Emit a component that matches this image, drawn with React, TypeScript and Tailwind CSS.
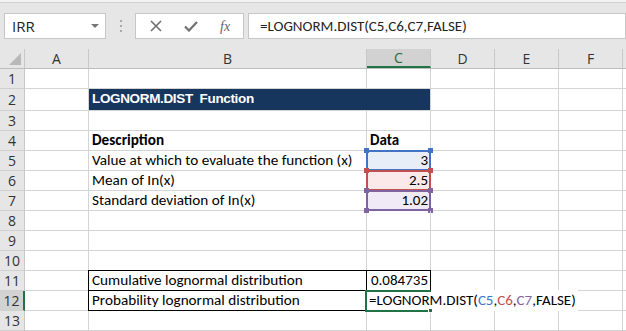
import React from "react";

const GRID = "border-[#d4d4d4]";
const CELL_FONT = { fontFamily: "Carlito, Lato, 'Liberation Sans', sans-serif" };

const COLS = [
  { key: "A", w: "w-[64px]" },
  { key: "B", w: "w-[278px]" },
  { key: "C", w: "w-[64px]" },
  { key: "D", w: "w-[64px]" },
  { key: "E", w: "w-[64px]" },
  { key: "F", w: "w-[64px]" },
];

type Sel = { color: string; fill: string };
const SEL: Record<number, Sel> = {
  5: { color: "border-[#4472c4]", fill: "bg-[#e8eef8]" },
  6: { color: "border-[#c0504d]", fill: "bg-[#fbe9e9]" },
  7: { color: "border-[#8064a2]", fill: "bg-[#efeaf6]" },
};
const HANDLE: Record<number, string> = {
  5: "bg-[#4472c4]",
  6: "bg-[#c0504d]",
  7: "bg-[#8064a2]",
};

function Toolbar() {
  return (
    <div className="relative h-[49px] bg-[#e6e6e6]">
      <div className="h-[3px] bg-[#f3f3f3] border-b border-[#d0d0d0]" />
      <div className="flex items-center pt-[10px]">
        <div className="ml-[4px] flex h-[26px] w-[102px] items-center justify-between border border-[#c6c6c6] bg-white pl-[7px] pr-[6px]">
          <span className="text-[15px] text-[#222]" style={{ fontFamily: "'Open Sans', sans-serif" }}>IRR</span>
          <svg width="8" height="5" viewBox="0 0 8 5"><path d="M0 0h8L4 4z" fill="#777" /></svg>
        </div>
        <div className="ml-[14px] flex flex-col gap-[3px]">
          <span className="h-[2px] w-[2px] bg-[#aaa]" />
          <span className="h-[2px] w-[2px] bg-[#aaa]" />
          <span className="h-[2px] w-[2px] bg-[#aaa]" />
        </div>
        <div className="ml-[13px] flex h-[26px] w-[109px] items-center border border-[#c6c6c6] bg-white">
          <svg className="ml-[14px]" width="12" height="12" viewBox="0 0 12 12">
            <path d="M1 1L11 11M11 1L1 11" stroke="#707070" strokeWidth="1.6" />
          </svg>
          <svg className="ml-[22px]" width="14" height="11" viewBox="0 0 14 11">
            <path d="M1 5.5L5 9.5L13 1" stroke="#707070" strokeWidth="2.2" fill="none" />
          </svg>
          <span className="ml-[22px] text-[14px] italic text-[#666]" style={{ fontFamily: "'Liberation Serif', serif" }}>
            fx
          </span>
        </div>
        <div className="ml-[4px] flex h-[26px] flex-1 items-center border border-[#c6c6c6] bg-white pl-[11px]">
          <span className="text-[15px] text-[#222]" style={CELL_FONT}>
            =LOGNORM.DIST(C5,C6,C7,FALSE)
          </span>
        </div>
      </div>
    </div>
  );
}

function HeaderRow() {
  return (
    <div className="flex h-[20px] border-b border-[#bdbdbd] bg-[#e6e6e6] text-[14px] text-[#333]" style={{ fontFamily: "'Open Sans', sans-serif" }}>
      <div className="relative w-[25px] shrink-0 border-r border-[#c8c8c8]">
        <svg className="absolute bottom-[3px] right-[3px]" width="12" height="12" viewBox="0 0 12 12">
          <path d="M12 0V12H0z" fill="#b8b8b8" />
        </svg>
      </div>
      {COLS.map((c) => (
        <div
          key={c.key}
          className={`${c.w} shrink-0 flex items-center justify-center border-r border-[#c8c8c8] ${
            c.key === "C" ? "bg-[#d2d2d2] text-[#1f6b40] border-b-2 border-b-[#217346]" : ""
          }`}
        >
          {c.key}
        </div>
      ))}
      <div className="flex-1" />
    </div>
  );
}

function RowHeader({ n }: { n: number }) {
  const active = n === 12;
  return (
    <div
      className={`w-[25px] shrink-0 flex items-center justify-center border-r text-[14px] ${
        active ? "bg-[#d2d2d2] border-r-2 border-r-[#217346] text-[#333]" : "bg-[#e6e6e6] border-[#c8c8c8] text-[#333]"
      } border-b border-b-[#d0d0d0]`}
      style={{ fontFamily: "'Open Sans', sans-serif" }}
    >
      {n}
    </div>
  );
}

function Row({ n }: { n: number }) {
  const h = n === 2 ? "h-[22px]" : "h-[20px]";
  const boxed = n === 11 || n === 12;
  const sel = SEL[n];

  return (
    <div className={`flex ${h}`}>
      <RowHeader n={n} />
      {/* A */}
      <div className={`w-[64px] shrink-0 border-r border-b ${GRID}`} />
      {/* B */}
      {n === 2 ? (
        <div
          className="flex w-[342px] shrink-0 items-center border-b border-r border-[#d4d4d4] bg-[#17365d] pl-[3px] text-[13.5px] font-bold tracking-[-0.35px] text-white"
          style={{ fontFamily: "'Liberation Sans', Arial, sans-serif" }}
        >
          LOGNORM.DIST&nbsp; Function
        </div>
      ) : (
        <>
          <div
            className={`w-[278px] shrink-0 flex items-center pl-[3px] text-[15.2px] text-black ${
              boxed ? "border-r border-b border-black -ml-px w-[279px] border-l" : `border-r border-b ${GRID}`
            } ${n === 11 ? "border-t -mt-px h-[21px]" : ""} ${n === 4 ? "font-bold" : ""}`}
            style={CELL_FONT}
          >
            {n === 4 && "Description"}
            {n === 5 && "Value at which to evaluate the function (x)"}
            {n === 6 && "Mean of In(x)"}
            {n === 7 && "Standard deviation of In(x)"}
            {n === 11 && "Cumulative lognormal distribution"}
            {n === 12 && "Probability lognormal distribution"}
          </div>
          {/* C */}
          <div
            className={`relative w-[64px] shrink-0 flex items-center text-[15px] text-black ${
              n === 11 ? "border-r border-b border-t -mt-px h-[21px] border-black justify-end pr-[2px]" : `border-r border-b ${GRID}`
            } ${sel ? `${sel.fill} justify-end pr-[2px]` : ""} ${n === 4 ? "font-bold pl-[3px]" : ""} ${
              n === 12 ? "z-10 overflow-visible" : ""
            }`}
            style={CELL_FONT}
          >
            {n === 4 && "Data"}
            {n === 5 && "3"}
            {n === 6 && "2.5"}
            {n === 7 && "1.02"}
            {n === 11 && "0.084735"}
            {sel && (
              <>
                <div className={`pointer-events-none absolute -left-px -top-px h-[21px] w-[65px] border-2 ${sel.color}`} />
                <span className={`absolute -left-[3px] -top-[3px] h-[5px] w-[5px] ${HANDLE[n]}`} />
                <span className={`absolute -right-[3px] -top-[3px] h-[5px] w-[5px] ${HANDLE[n]}`} />
                <span className={`absolute -left-[3px] -bottom-[3px] h-[5px] w-[5px] ${HANDLE[n]}`} />
                <span className={`absolute -right-[3px] -bottom-[3px] h-[5px] w-[5px] ${HANDLE[n]}`} />
              </>
            )}
            {n === 12 && (
              <>
                <div className="absolute -left-px -top-px flex h-[21px] w-[212px] items-center bg-white pl-[3px] whitespace-nowrap">
                  <span>=LOGNORM.DIST(</span>
                  <span className="text-[#4472c4]">C5</span>
                  <span>,</span>
                  <span className="text-[#c0504d]">C6</span>
                  <span>,</span>
                  <span className="text-[#8064a2]">C7</span>
                  <span>,FALSE)</span>
                  <span className="ml-[3px] h-[17px] w-[2px] bg-[#333]" />
                </div>
                <div className="pointer-events-none absolute -left-[2px] -top-[1px] h-[22px] w-[66px] border-2 border-r-0 border-[#217346]" />
                <span className="absolute -right-[3px] -bottom-[3px] h-[5px] w-[5px] border border-white bg-[#217346]" />
              </>
            )}
          </div>
        </>
      )}
      {/* D E F */}
      <div className={`w-[64px] shrink-0 border-r border-b ${GRID}`} />
      <div className={`w-[64px] shrink-0 border-r border-b ${GRID}`} />
      <div className={`w-[64px] shrink-0 border-r border-b ${GRID}`} />
      <div className={`flex-1 border-b ${GRID}`} />
    </div>
  );
}

export default function App() {
  const rows = Array.from({ length: 13 }, (_, i) => i + 1);
  return (
    <div className="h-[331px] w-[626px] overflow-hidden bg-white">
      <Toolbar />
      <HeaderRow />
      {rows.map((n) => (
        <Row key={n} n={n} />
      ))}
    </div>
  );
}
